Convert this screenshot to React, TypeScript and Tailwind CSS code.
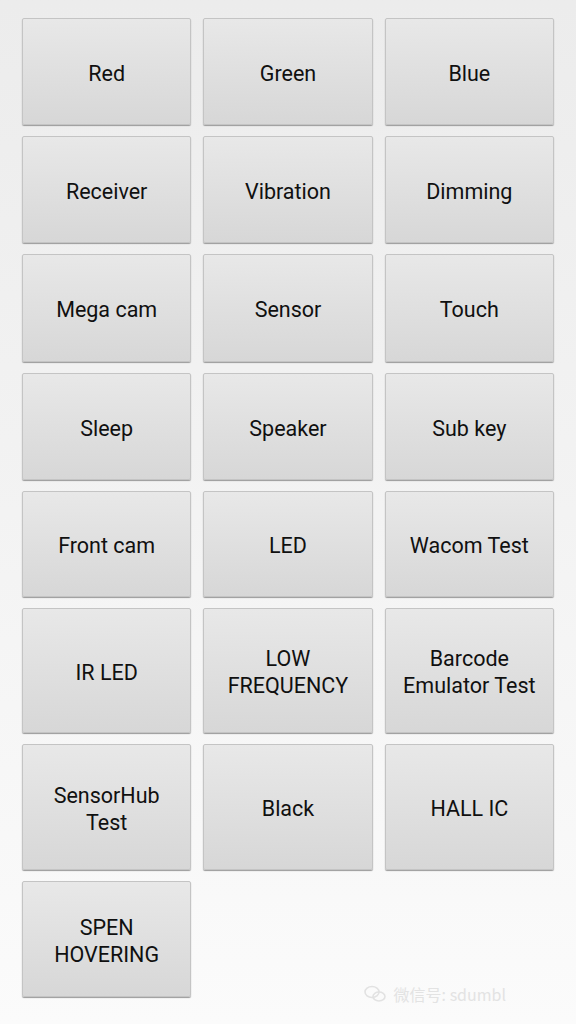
import React from "react";

type Item = { label: string[] };

const rows: { h: string; items: Item[] }[] = [
  { h: "h-[107px]", items: [{ label: ["Red"] }, { label: ["Green"] }, { label: ["Blue"] }] },
  { h: "h-[107px]", items: [{ label: ["Receiver"] }, { label: ["Vibration"] }, { label: ["Dimming"] }] },
  { h: "h-[108px]", items: [{ label: ["Mega cam"] }, { label: ["Sensor"] }, { label: ["Touch"] }] },
  { h: "h-[107px]", items: [{ label: ["Sleep"] }, { label: ["Speaker"] }, { label: ["Sub key"] }] },
  { h: "h-[106px]", items: [{ label: ["Front cam"] }, { label: ["LED"] }, { label: ["Wacom Test"] }] },
  { h: "h-[125px]", items: [{ label: ["IR LED"] }, { label: ["LOW", "FREQUENCY"] }, { label: ["Barcode", "Emulator Test"] }] },
  { h: "h-[126px]", items: [{ label: ["SensorHub", "Test"] }, { label: ["Black"] }, { label: ["HALL IC"] }] },
  { h: "h-[116px]", items: [{ label: ["SPEN", "HOVERING"] }] },
];

const TestButton = ({ label, h }: { label: string[]; h: string }) => (
  <button
    className={`${h} flex flex-col items-center justify-center pt-[3px] rounded-[2px] border border-[#c4c4c4] bg-gradient-to-b from-[#e8e8e8] to-[#d7d7d7] shadow-[0_1px_1px_#9a9a9a] text-[21.5px] leading-[27px] text-[#101010]`}
  >
    {label.map((l) => (
      <span key={l}>{l}</span>
    ))}
  </button>
);

export default function App() {
  return (
    <div
      className="relative w-[576px] h-[1024px] overflow-hidden bg-gradient-to-b from-[#ececec] via-[#f3f3f3] to-[#fbfbfb]"
      style={{ fontFamily: "Roboto, 'Noto Sans', sans-serif" }}
    >
      <div className="flex flex-col gap-[11px] pt-[18px] pl-[22px] pr-[22px]">
        {rows.map((row, i) => (
          <div key={i} className="grid grid-cols-3 gap-x-[12px]">
            {row.items.map((item) => (
              <TestButton key={item.label.join(" ")} label={item.label} h={row.h} />
            ))}
          </div>
        ))}
      </div>

      {/* faint watermark */}
      <div className="absolute right-[70px] bottom-[18px] flex items-center gap-2 text-[16px] text-[#e3e3e3]">
        <svg width="22" height="18" viewBox="0 0 22 18" fill="none" stroke="#e2e2e2" strokeWidth="1.6">
          <ellipse cx="8" cy="7" rx="7" ry="5.5" />
          <ellipse cx="15" cy="11.5" rx="6" ry="4.5" />
        </svg>
        <span style={{ fontFamily: "'Noto Sans CJK SC', sans-serif" }}>微信号: sdumbl</span>
      </div>
    </div>
  );
}
